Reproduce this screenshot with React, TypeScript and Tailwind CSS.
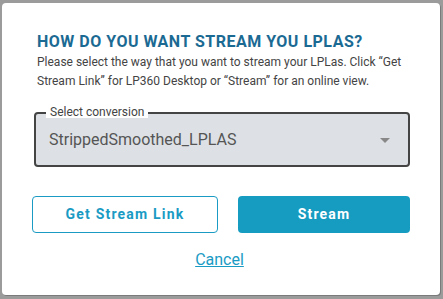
import React from "react";

export default function App() {
  return (
    <div className="w-[443px] h-[299px] bg-[#9b9b9b] pt-[3px] pl-[2px]" style={{ fontFamily: "Roboto, 'Liberation Sans', sans-serif" }}>
      <div className="w-[438px] h-[292px] bg-white rounded-[4px] shadow-[1px_1px_0_#7a7a7a] px-[35px] pt-[29px]">
        <h2 className="text-[16px] leading-[20px] font-bold text-[#1b6a93] tracking-[0.5px]">HOW DO YOU WANT STREAM YOU LPLAS?</h2>
        <p className="mt-[1px] text-[12px] leading-[19px] text-[#444]">
          Please select the way that you want to stream your LPLas. Click “Get Stream Link” for LP360 Desktop or “Stream” for an online view.
        </p>
        <div className="mt-[21px] h-[55px] w-[376px] -ml-[3px] border-2 border-[#444] rounded-[4px] bg-[#dde1e5] pl-[13px] relative flex items-center">
          <span className="absolute left-[10px] -top-[8px] px-[4px] bg-white text-[12px] leading-[12px] text-[#444]">Select conversion</span>
          <span className="text-[16px] text-[#555] mt-[1px]">StrippedSmoothed_LPLAS</span>
          <span className="absolute right-[18px] top-[24px] w-0 h-0 border-l-[5px] border-r-[5px] border-t-[5px] border-l-transparent border-r-transparent border-t-[#888]"></span>
        </div>
        <div className="mt-[29px] flex gap-[20px] -ml-[5px]">
          <button className="shrink-0 w-[186px] h-[37px] border border-[#1a9bc4] rounded-[4px] text-[#1a9bc4] text-[14px] font-bold tracking-[1.2px] bg-white">Get Stream Link</button>
          <button className="shrink-0 w-[172px] h-[37px] rounded-[4px] bg-[#169bc1] text-white text-[14px] font-bold tracking-[1.2px]">Stream</button>
        </div>
        <div className="mt-[15px] flex justify-center -ml-[3px]">
          <a className="text-[16px] text-[#1a9bc4] underline">Cancel</a>
        </div>
      </div>
    </div>
  );
}
